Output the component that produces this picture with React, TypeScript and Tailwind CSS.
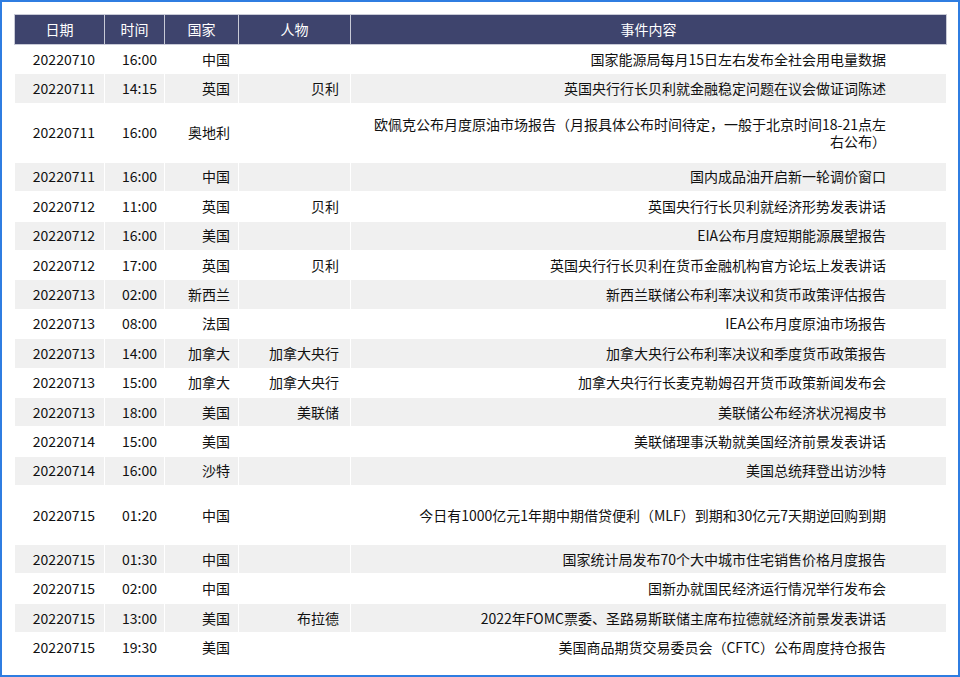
const rows: [string,string,string,string,string,boolean?][] = [
["20220710","16:00","中国","","国家能源局每月15日左右发布全社会用电量数据"],
["20220711","14:15","英国","贝利","英国央行行长贝利就金融稳定问题在议会做证词陈述"],
["20220711","16:00","奥地利","","欧佩克公布月度原油市场报告（月报具体公布时间待定，一般于北京时间18-21点左右公布）",true],
["20220711","16:00","中国","","国内成品油开启新一轮调价窗口"],
["20220712","11:00","英国","贝利","英国央行行长贝利就经济形势发表讲话"],
["20220712","16:00","美国","","EIA公布月度短期能源展望报告"],
["20220712","17:00","英国","贝利","英国央行行长贝利在货币金融机构官方论坛上发表讲话"],
["20220713","02:00","新西兰","","新西兰联储公布利率决议和货币政策评估报告"],
["20220713","08:00","法国","","IEA公布月度原油市场报告"],
["20220713","14:00","加拿大","加拿大央行","加拿大央行公布利率决议和季度货币政策报告"],
["20220713","15:00","加拿大","加拿大央行","加拿大央行行长麦克勒姆召开货币政策新闻发布会"],
["20220713","18:00","美国","美联储","美联储公布经济状况褐皮书"],
["20220714","15:00","美国","","美联储理事沃勒就美国经济前景发表讲话"],
["20220714","16:00","沙特","","美国总统拜登出访沙特"],
["20220715","01:20","中国","","今日有1000亿元1年期中期借贷便利（MLF）到期和30亿元7天期逆回购到期",true],
["20220715","01:30","中国","","国家统计局发布70个大中城市住宅销售价格月度报告"],
["20220715","02:00","中国","","国新办就国民经济运行情况举行发布会"],
["20220715","13:00","美国","布拉德","2022年FOMC票委、圣路易斯联储主席布拉德就经济前景发表讲话"],
["20220715","19:30","美国","","美国商品期货交易委员会（CFTC）公布周度持仓报告"],
];
export default function App(){
  const f={fontFamily:'"Noto Sans CJK SC","DejaVu Sans",sans-serif'};
  return <div className="w-[960px] h-[677px] border-2 border-[#2f7de1] bg-white pt-[12px] pl-[12px]" style={f}>
    <table className="w-[933px] border-collapse text-[14px] text-[#111] leading-[17px]">
      <thead><tr className="bg-[#3e446d] text-white h-[30px]">
        {["日期","时间","国家","人物","事件内容"].map((h,i)=><th key={i} className={"font-normal border border-[#c8cad6] "+["w-[90px]","w-[60px]","w-[74px]","w-[112px]",""][i]}>{h}</th>)}
      </tr></thead>
      <tbody>{rows.map((r,i)=><tr key={i} className={(i%2?"bg-[#f0f0f0]":"bg-white")+" "+(r[5]?"h-[59px]":"h-[29.4px]")}>
        <td className="border border-white text-right pr-[9px]">{r[0]}</td>
        <td className="border border-white text-right pr-[7px]">{r[1]}</td>
        <td className="border border-white text-right pr-[8px]">{r[2]}</td>
        <td className="border border-white text-right pr-[11px]">{r[3]}</td>
        <td className="border border-white text-right pr-[60px] pl-[22px]">{r[4]}</td>
      </tr>)}</tbody>
    </table>
  </div>;
}
